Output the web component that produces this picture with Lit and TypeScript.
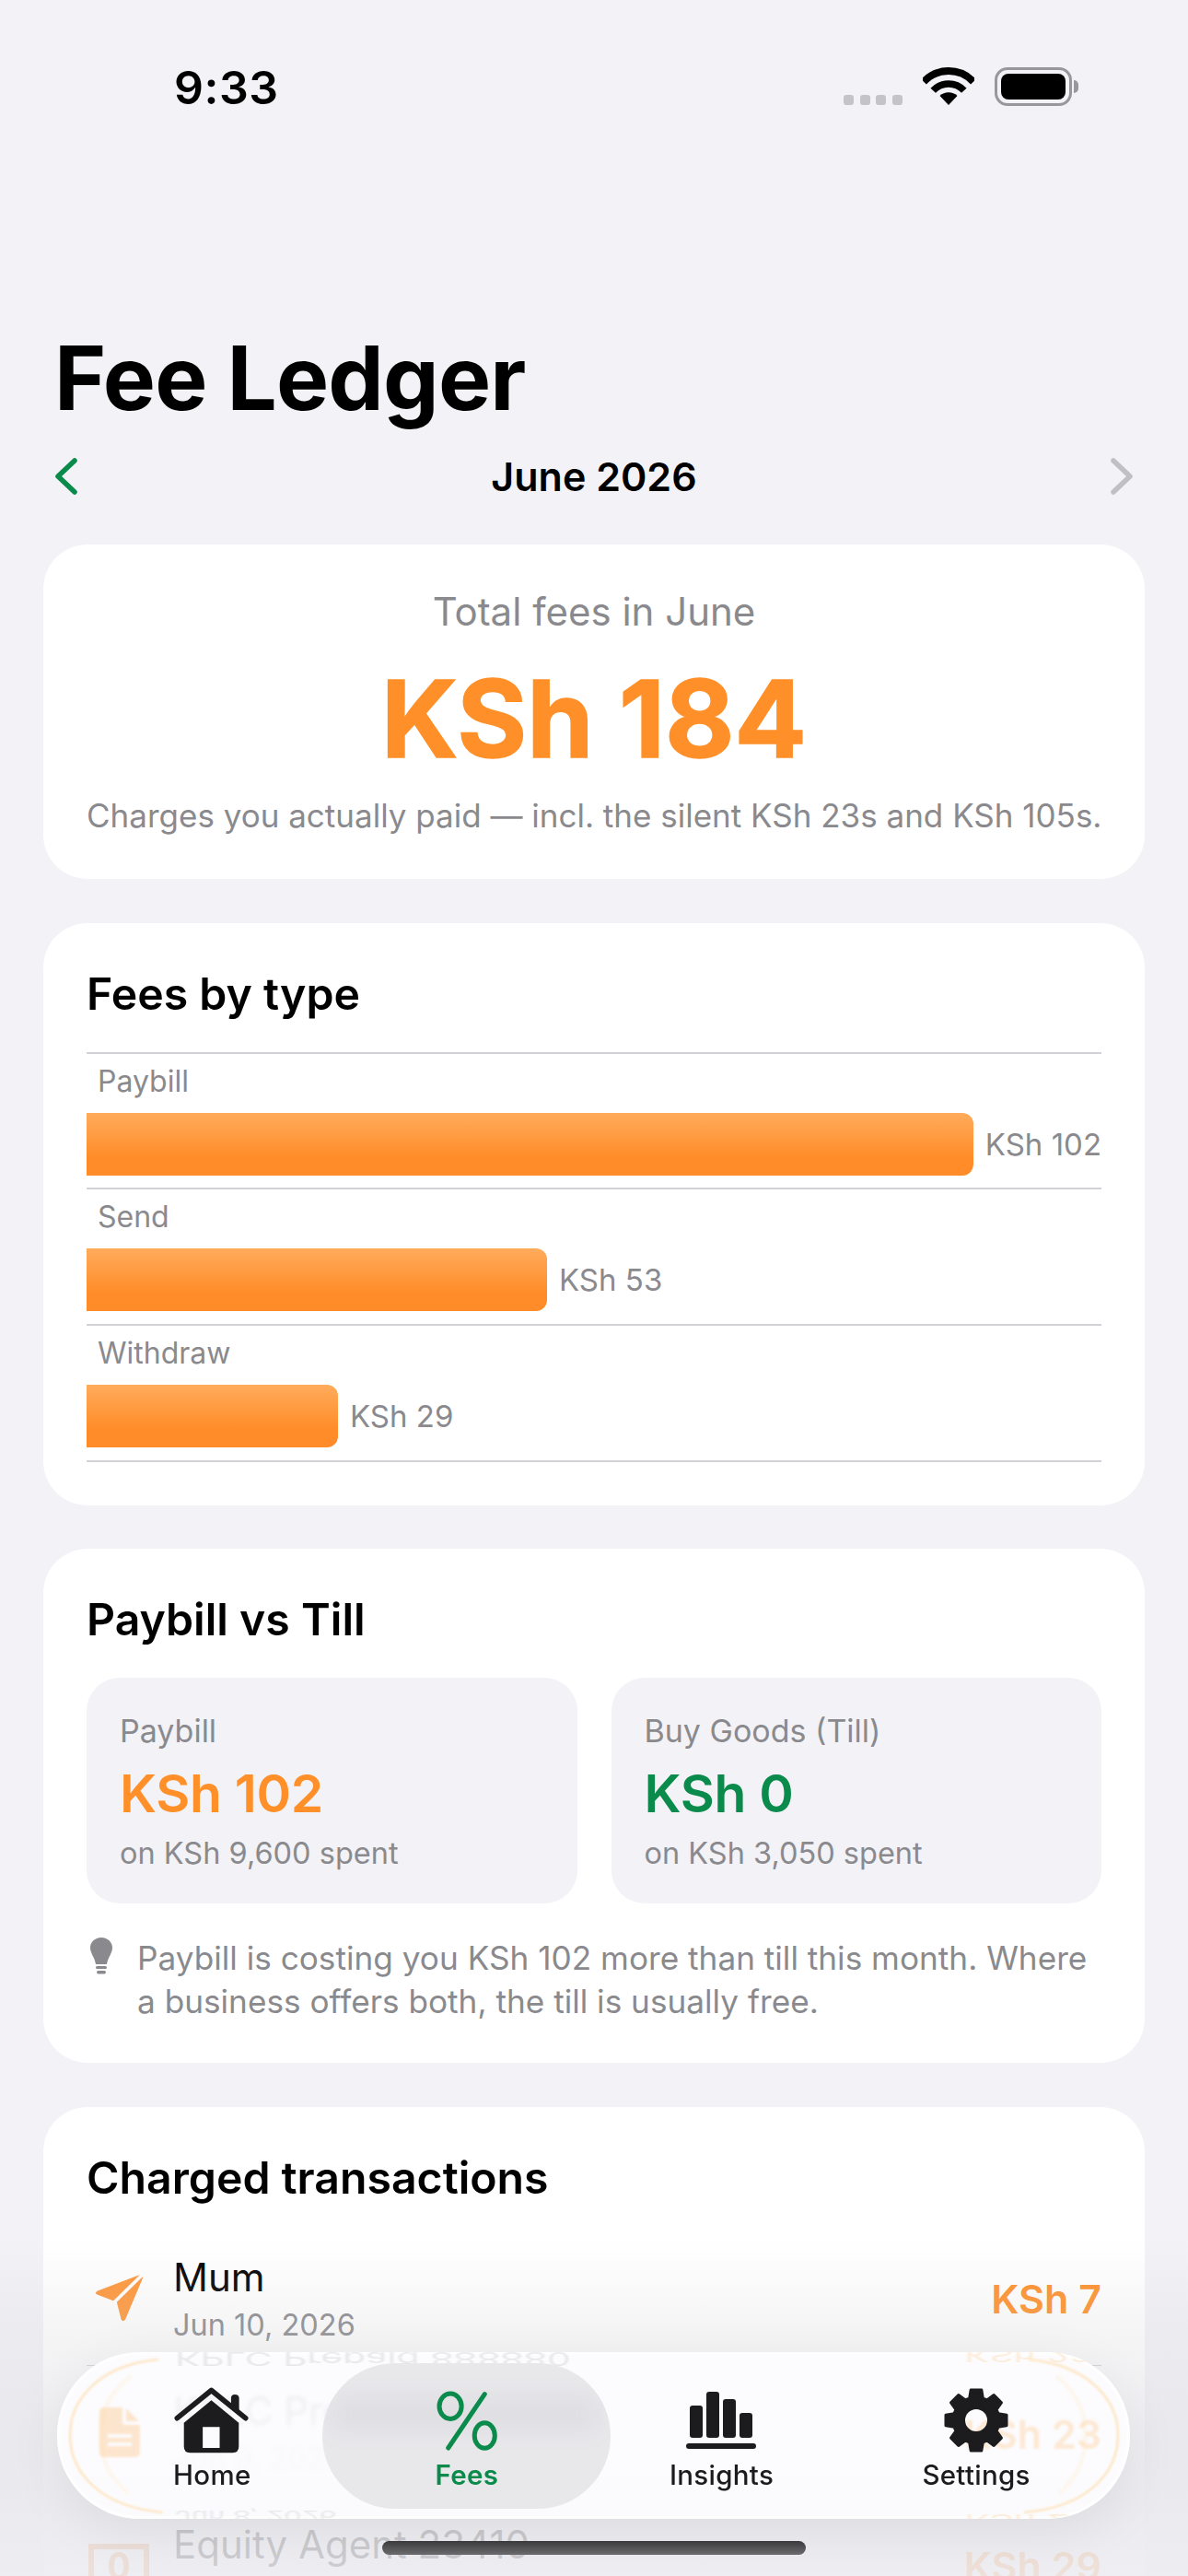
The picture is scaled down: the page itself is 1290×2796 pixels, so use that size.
import { LitElement, html, css, svg } from "lit";
import { customElement } from "lit/decorators.js";

const feeTypes = [
  { label: "Paybill", amount: "KSh 102", width: 963 },
  { label: "Send", amount: "KSh 53", width: 500 },
  { label: "Withdraw", amount: "KSh 29", width: 273 },
];

const gearPath = (() => {
  const pt = (r: number, deg: number) => {
    const a = (deg * Math.PI) / 180;
    return `${(40 + r * Math.cos(a)).toFixed(2)} ${(40 + r * Math.sin(a)).toFixed(2)}`;
  };
  let d = "";
  for (let i = 0; i < 8; i++) {
    const a = i * 45 - 90;
    d += `${i ? "L" : "M"}${pt(25, a - 17)} L${pt(33.5, a - 10)} L${pt(33.5, a + 10)} L${pt(25, a + 17)} `;
  }
  d += "Z M53.5 40 A13.5 13.5 0 1 0 26.5 40 A13.5 13.5 0 1 0 53.5 40 Z";
  return d;
})();

const icons = {
  plane: svg`<svg class="tx-svg" width="57" height="57" viewBox="120 140 170 170"><path fill="#ff9638" d="M272 149 L135 201 Q122 208 135 214 L186 233 Z"/><path fill="#ff9638" d="M279 157 L197 238 L211 293 Q217 305 225 293 L281 160 Q282 155 279 157 Z"/></svg>`,
  doc: svg`<svg class="tx-svg" width="44" height="54" viewBox="0 0 44 54"><path fill="#ff9d2e" d="M5 0 H25 V15 Q25 19 29 19 H44 V49 Q44 54 39 54 H5 Q0 54 0 49 V5 Q0 0 5 0 Z M29 1 L43 15 H29 Z M9 29 V33 H35 V29 Z M9 38 V42 H35 V38 Z" fill-rule="evenodd"/></svg>`,
  note: svg`<svg class="tx-svg" width="66" height="48" viewBox="0 0 66 48"><path fill="#f08a3c" fill-rule="evenodd" d="M0 0 H66 V48 H0 Z M6 6 V42 H60 V6 Z M33 9 C25 9 22 16 22 24 C22 32 25 39 33 39 C41 39 44 32 44 24 C44 16 41 9 33 9 Z M33 14 C37 14 38 19 38 24 C38 29 37 34 33 34 C29 34 28 29 28 24 C28 19 29 14 33 14 Z"/></svg>`,
  home: svg`<svg width="82" height="74" viewBox="450 140 245 220"><path fill="#1c1c1e" d="M635 178 Q635 166 647 166 Q661 166 661 178 V222 L635 200 Z"/><path fill="none" stroke="#1c1c1e" stroke-width="17" stroke-linecap="round" stroke-linejoin="round" d="M460 243 L571 153 L682 243"/><path fill="#1c1c1e" fill-rule="evenodd" d="M571 185 L660 258 V335 Q660 355 640 355 H502 Q482 355 482 335 V258 Z M543 272 V340 H598 V272 Z"/></svg>`,
  percent: svg`<svg width="67" height="67" viewBox="100 60 200 200" fill="none" stroke="#0a8a4b" stroke-width="15" stroke-linecap="round"><ellipse cx="148" cy="113" rx="36" ry="41"/><ellipse cx="259" cy="208" rx="33" ry="41"/><path d="M259 74 L141 248"/></svg>`,
  bars: svg`<svg width="76" height="62" viewBox="0 0 76 62" fill="#1c1c1e"><rect x="4" y="15" width="14" height="35" rx="3"/><rect x="22" y="0" width="14" height="50" rx="3"/><rect x="40" y="8" width="14" height="42" rx="3"/><rect x="58" y="23" width="14" height="27" rx="3"/><rect x="0" y="56" width="76" height="6" rx="3"/></svg>`,
  gear: svg`<svg width="76" height="76" viewBox="2 2 76 76"><path fill="#1c1c1e" stroke="#1c1c1e" stroke-width="3" stroke-linejoin="round" fill-rule="evenodd" d=${gearPath}/></svg>`,
};

@customElement("app-root")
export class AppRoot extends LitElement {
  static styles = css`
    :host {
      display: block;
      position: relative;
      width: 1290px;
      height: 2796px;
      overflow: hidden;
      background: #f2f2f7;
      font-family: Inter, "Liberation Sans", sans-serif;
      color: #000;
    }
    .status {
      display: flex;
      align-items: flex-start;
      justify-content: space-between;
      height: 352px;
      padding: 64px 119px 0 189px;
      box-sizing: border-box;
    }
    .time {
      font-size: 50px;
      line-height: 62px;
      font-weight: 600;
      letter-spacing: 0.5px;
    }
    .sys {
      display: flex;
      align-items: flex-start;
      padding-top: 9px;
    }
    .dots {
      display: flex;
      gap: 6.7px;
      margin: 30px 22px 0 0;
    }
    .dots i {
      width: 11px;
      height: 11px;
      border-radius: 3px;
      background: #c4c4c8;
    }
    .battery {
      display: flex;
      align-items: center;
      margin-left: 22px;
    }
    .battery-body {
      width: 84px;
      height: 42px;
      box-sizing: border-box;
      border: 3px solid #98989c;
      border-radius: 14px;
      padding: 4px;
    }
    .battery-body i {
      display: block;
      height: 100%;
      border-radius: 8px;
      background: #000;
    }
    .battery-cap {
      width: 5px;
      height: 14px;
      margin-left: 2px;
      border-radius: 0 7px 7px 0;
      background: #98989c;
    }
    h1 {
      margin: 0;
      padding: 0 0 0 59px;
      font-size: 96px;
      line-height: 116px;
      font-weight: 700;
      letter-spacing: -0.8px;
    }
    .month {
      display: flex;
      align-items: center;
      justify-content: space-between;
      height: 60px;
      padding: 0 60px;
      margin-top: 19px;
    }
    .month span {
      font-size: 43px;
      font-weight: 600;
    }
    .cards {
      display: flex;
      flex-direction: column;
      gap: 47.5px;
      padding: 44px 47px 0;
    }
    .card {
      background: #fff;
      border-radius: 48px;
      padding: 0 47px;
    }
    .total {
      height: 363px;
      box-sizing: border-box;
      padding-top: 48px;
      text-align: center;
    }
    .total-label {
      font-size: 42px;
      line-height: 50px;
      color: #8a8a8e;
    }
    .total-value {
      margin-top: 21px;
      font-size: 116px;
      line-height: 140px;
      font-weight: 700;
      color: #ff9029;
      -webkit-text-stroke: 1.5px #ff9029;
    }
    .total-note {
      margin-top: 13px;
      font-size: 35px;
      line-height: 44px;
      color: #8a8a8e;
      white-space: nowrap;
    }
    h2 {
      margin: 0;
      font-size: 48.2px;
      line-height: 56px;
      font-weight: 600;
    }
    .types {
      height: 632px;
      box-sizing: border-box;
      padding-top: 49px;
    }
    .type-list {
      margin-top: 35px;
      border-top: 2.5px solid #d2d2d6;
    }
    .type-row {
      height: 145.8px;
      border-bottom: 2.5px solid #d2d2d6;
    }
    .type-label {
      padding: 10px 0 0 12px;
      font-size: 32px;
      line-height: 40px;
      color: #8a8a8e;
    }
    .type-bar {
      display: flex;
      align-items: center;
      gap: 13px;
      margin-top: 14px;
      font-size: 33px;
      color: #8a8a8e;
    }
    .bar {
      height: 68px;
      border-radius: 0 12px 12px 0;
      background: linear-gradient(180deg, #ffab5c 0%, #ff8c28 72%);
    }
    .versus {
      height: 558px;
      box-sizing: border-box;
      padding-top: 49px;
    }
    .tiles {
      display: grid;
      grid-template-columns: 1fr 1fr;
      gap: 37px;
      margin-top: 35px;
    }
    .tile {
      height: 245px;
      box-sizing: border-box;
      padding: 38px 36px 0;
      border-radius: 36px;
      background: #f2f2f7;
    }
    .tile-label,
    .tile-note {
      line-height: 40px;
      color: #8a8a8e;
      white-space: nowrap;
    }
    .tile-label {
      font-size: 34px;
    }
    .tile-note {
      font-size: 32.5px;
      margin-top: 10px;
    }
    .tile-value {
      margin-top: 13px;
      font-size: 57px;
      line-height: 70px;
      font-weight: 600;
      letter-spacing: -0.3px;
    }
    .orange {
      color: #ff9029;
    }
    .green {
      color: #0a8a4b;
    }
    .hint {
      display: flex;
      gap: 27px;
      margin-top: 36px;
      font-size: 35.2px;
      line-height: 47px;
      color: #8a8a8e;
    }
    .hint svg {
      flex: none;
      margin: 1px 0 0 4px;
    }
    .txs {
      padding-top: 49px;
      padding-bottom: 200px;
    }
    .tx-list {
      margin-top: 31px;
    }
    .tx {
      display: flex;
      align-items: center;
      height: 145px;
      box-sizing: border-box;
      border-bottom: 1.5px solid #d2d2d6;
    }
    .tx:last-child {
      border-bottom: 0;
    }
    .tx-icon {
      flex: none;
      width: 94px;
      display: flex;
      justify-content: center;
      padding-right: 24px;
      box-sizing: border-box;
    }
    .tx-main {
      flex: 1;
    }
    .tx-title {
      font-size: 42px;
      line-height: 50px;
    }
    .tx-date {
      margin-top: 8px;
      font-size: 32.5px;
      line-height: 38px;
      color: #8a8a8e;
    }
    .tx-amount {
      font-size: 43px;
      font-weight: 600;
      color: #ff9029;
    }
    .fade {
      position: absolute;
      left: 0;
      right: 0;
      top: 2430px;
      bottom: 0;
      background: linear-gradient(
        180deg,
        rgba(200, 200, 205, 0) 0%,
        rgba(205, 205, 210, 0.2) 27%,
        rgba(228, 228, 232, 0.6) 55%,
        rgba(232, 232, 237, 0.84) 78%,
        rgba(236, 236, 241, 0.88) 100%
      );
    }
    .nav {
      position: absolute;
      left: 62px;
      top: 2553px;
      width: 1165px;
      height: 181px;
      display: grid;
      grid-template-columns: repeat(4, 276.6px);
      padding-left: 30px;
      box-sizing: border-box;
      border-radius: 90px;
      box-shadow: 0 14px 60px rgba(0, 0, 0, 0.07);
    }
    .glass {
      position: absolute;
      inset: 0;
      border-radius: 90px;
      overflow: hidden;
      background: rgba(253, 253, 255, 0.9);
      backdrop-filter: blur(2px);
      box-shadow: inset 0 0 0 3px rgba(255, 255, 255, 0.7);
    }
    .ghost {
      position: absolute;
      font-size: 41px;
      line-height: 50px;
      white-space: nowrap;
      color: rgba(60, 60, 67, 0.1);
      filter: blur(1px);
    }
    .flip {
      transform: scaleY(-0.5);
    }
    .ghost.amount {
      color: rgba(255, 170, 70, 0.2);
    }
    .g-title {
      left: 128px;
      top: -18px;
    }
    .g-date {
      left: 128px;
      top: 152px;
      font-size: 31px;
    }
    .g-top {
      left: 985px;
      top: -22px;
    }
    .g-bottom {
      left: 985px;
      top: 158px;
    }
    .g-amount {
      left: 985px;
      top: 64px;
      font-size: 43px;
      font-weight: 600;
    }
    .ghost.g-amount {
      color: rgba(255, 170, 70, 0.2);
    }
    .g-doc {
      position: absolute;
      left: 46px;
      top: 60px;
      opacity: 0.2;
      filter: blur(1px);
    }
    .rim {
      position: absolute;
      inset: 0;
      filter: blur(1px);
    }
    .pill {
      position: absolute;
      left: 288px;
      top: 12px;
      width: 313px;
      height: 158px;
      overflow: hidden;
      border-radius: 79px;
      background: #e8e8eb;
    }
    .pill i {
      position: absolute;
      left: 10px;
      right: 16px;
      top: 38px;
      height: 34px;
      background: rgba(120, 120, 125, 0.08);
      filter: blur(12px);
    }
    .tab {
      position: relative;
      display: flex;
      flex-direction: column;
      align-items: center;
      padding-top: 35px;
      font-size: 29.5px;
      font-weight: 500;
      letter-spacing: 0.3px;
      color: #1c1c1e;
    }
    .tab.active {
      color: #0a8a4b;
      font-weight: 600;
    }
    .tab-icon {
      height: 78px;
      display: flex;
      align-items: center;
      justify-content: center;
    }
    .tab-label {
      line-height: 34px;
      margin-top: 3px;
    }
    .indicator {
      position: absolute;
      left: 415px;
      top: 2758px;
      width: 460px;
      height: 15px;
      border-radius: 8px;
      background: linear-gradient(180deg, #3a3a3c 0%, #6c6c6e 100%);
    }
  `;

  render() {
    return html`
      <div class="status">
        <div class="time">9:33</div>
        <div class="sys">
          <div class="dots"><i></i><i></i><i></i><i></i></div>
          <svg width="56" height="41" viewBox="0 0 56 41" fill="none" stroke="#000">
            <path stroke-width="8" d="M1 15.8 A37 37 0 0 1 55 15.8" />
            <path stroke-width="7.5" d="M11.2 25.3 A23 23 0 0 1 44.8 25.3" />
            <path fill="#000" stroke="none" d="M28 41 L18.5 31 A14 14 0 0 1 37.5 31 Z" />
          </svg>
          <div class="battery">
            <div class="battery-body"><i></i></div>
            <div class="battery-cap"></div>
          </div>
        </div>
      </div>

      <h1>Fee Ledger</h1>
      <div class="month">
        <svg width="24" height="40" viewBox="0 0 24 40" fill="none" stroke="#0a8a4b" stroke-width="5.5" stroke-linecap="round" stroke-linejoin="round"><path d="M21 3 L3 20 L21 37" /></svg>
        <span>June 2026</span>
        <svg width="24" height="40" viewBox="0 0 24 40" fill="none" stroke="#bfbfc4" stroke-width="5.5" stroke-linecap="round" stroke-linejoin="round"><path d="M3 3 L21 20 L3 37" /></svg>
      </div>

      <div class="cards">
        <section class="card total">
          <div class="total-label">Total fees in June</div>
          <div class="total-value">KSh 184</div>
          <div class="total-note">Charges you actually paid — incl. the silent KSh 23s and KSh 105s.</div>
        </section>

        <section class="card types">
          <h2>Fees by type</h2>
          <div class="type-list">
            ${feeTypes.map(
              (t) => html`<div class="type-row">
                <div class="type-label">${t.label}</div>
                <div class="type-bar">
                  <div class="bar" style="width:${t.width}px"></div>
                  <span>${t.amount}</span>
                </div>
              </div>`
            )}
          </div>
        </section>

        <section class="card versus">
          <h2>Paybill vs Till</h2>
          <div class="tiles">
            <div class="tile">
              <div class="tile-label">Paybill</div>
              <div class="tile-value orange">KSh 102</div>
              <div class="tile-note">on KSh 9,600 spent</div>
            </div>
            <div class="tile">
              <div class="tile-label">Buy Goods (Till)</div>
              <div class="tile-value green">KSh 0</div>
              <div class="tile-note">on KSh 3,050 spent</div>
            </div>
          </div>
          <div class="hint">
            <svg width="24" height="40" viewBox="0 0 24 40" fill="#8a8a8e"><path d="M12 0 C19 0 24 5 24 11 C24 17 19 22 18 29 H6 C5 22 0 17 0 11 C0 5 5 0 12 0 Z" /><rect x="6" y="31" width="12" height="3" rx="1.5" /><rect x="7" y="36" width="10" height="3.5" rx="1.7" /></svg>
            <div>Paybill is costing you KSh 102 more than till this month. Where a business offers both, the till is usually free.</div>
          </div>
        </section>

        <section class="card txs">
          <h2>Charged transactions</h2>
          <div class="tx-list">
            <div class="tx">
              <div class="tx-icon">${icons.plane}</div>
              <div class="tx-main">
                <div class="tx-title">Mum</div>
                <div class="tx-date">Jun 10, 2026</div>
              </div>
              <div class="tx-amount">KSh 7</div>
            </div>
            <div class="tx">
              <div class="tx-icon">${icons.doc}</div>
              <div class="tx-main">
                <div class="tx-title">KPLC Prepaid 888880</div>
                <div class="tx-date">Jun 9, 2026</div>
              </div>
              <div class="tx-amount">KSh 23</div>
            </div>
            <div class="tx">
              <div class="tx-icon">${icons.note}</div>
              <div class="tx-main">
                <div class="tx-title">Equity Agent 23410</div>
                <div class="tx-date">Jun 8, 2026</div>
              </div>
              <div class="tx-amount">KSh 29</div>
            </div>
          </div>
        </section>
      </div>

      <div class="fade"></div>

      <nav class="nav">
        <div class="glass" aria-hidden="true">
          <span class="ghost flip g-title">KPLC Prepaid 888880</span>
          <span class="ghost amount flip g-top">KSh 23</span>
          <span class="ghost flip g-date">Jun 8, 2026</span>
          <span class="ghost amount flip g-bottom">KSh 29</span>
          <span class="ghost g-amount">KSh 23</span>
          <div class="g-doc">${icons.doc}</div>
          <svg class="rim" width="1165" height="181" viewBox="0 0 1165 181" fill="none" stroke="rgba(255,205,130,.42)" stroke-width="3">
            <path d="M110 8 C45 14 14 52 14 90 C14 130 46 168 115 174" />
            <path d="M80 26 C52 48 46 70 48 100 C50 125 62 140 78 154" stroke-width="5" stroke="rgba(255,220,160,.16)" />
            <path d="M1055 8 C1120 14 1152 52 1152 90 C1152 130 1120 168 1050 174" />
            <path d="M1085 26 C1112 48 1118 70 1116 100 C1114 125 1102 140 1088 154" stroke-width="5" stroke="rgba(255,220,160,.16)" />
          </svg>
        </div>
        <div class="pill"><i></i></div>
        <div class="tab"><div class="tab-icon">${icons.home}</div><div class="tab-label">Home</div></div>
        <div class="tab active"><div class="tab-icon">${icons.percent}</div><div class="tab-label">Fees</div></div>
        <div class="tab"><div class="tab-icon">${icons.bars}</div><div class="tab-label">Insights</div></div>
        <div class="tab"><div class="tab-icon">${icons.gear}</div><div class="tab-label">Settings</div></div>
      </nav>

      <div class="indicator"></div>
    `;
  }
}
